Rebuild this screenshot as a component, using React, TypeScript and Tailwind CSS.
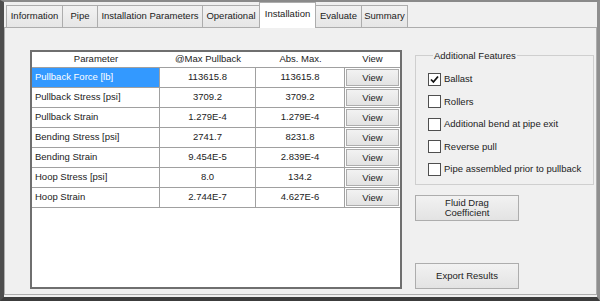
import React from 'react';

const tabs = ['Information', 'Pipe', 'Installation Parameters', 'Operational', 'Installation', 'Evaluate', 'Summary'];
const tabWidths = ['w-[57px]', 'w-[36px]', 'w-[106px]', 'w-[58px]', 'w-[57px]', 'w-[47px]', 'w-[47px]'];

const rows = [
    ['Pullback Force [lb]', '113615.8', '113615.8'],
    ['Pullback Stress [psi]', '3709.2', '3709.2'],
    ['Pullback Strain', '1.279E-4', '1.279E-4'],
    ['Bending Stress [psi]', '2741.7', '8231.8'],
    ['Bending Strain', '9.454E-5', '2.839E-4'],
    ['Hoop Stress [psi]', '8.0', '134.2'],
    ['Hoop Strain', '2.744E-7', '4.627E-6'],
];

const features = [
    { label: 'Ballast', checked: true },
    { label: 'Rollers', checked: false },
    { label: 'Additional bend at pipe exit', checked: false },
    { label: 'Reverse pull', checked: false },
    { label: 'Pipe assembled prior to pullback', checked: false },
];

const CheckBox = ({ checked }: { checked: boolean }) => (
    <div className="w-[13px] h-[13px] border border-[#4f4f4f] bg-white flex items-center justify-center shrink-0">
        {checked && (
            <svg width="9" height="9" viewBox="0 0 9 9">
                <path d="M1 4.5 L3.4 7 L8 1.5" fill="none" stroke="#111" strokeWidth="1.8" />
            </svg>
        )}
    </div>
);

const WinButton = ({ children, className = '' }: { children: React.ReactNode, className?: string }) => (
    <div className={`border border-[#adadad] bg-gradient-to-b from-[#f2f2f2] to-[#e3e3e3] flex items-center justify-center text-center leading-[10px] ${className}`}>
        {children}
    </div>
);

export default function App() {
    return (
        <div className="w-[600px] h-[301px] box-border bg-[#f0f0f0] border-t-2 border-t-[#8a8a8a] border-l-4 border-l-[#4d4d4d] border-b-4 border-b-[#3c3c3c] border-r-[3px] border-r-[#8f8f8f] font-['Liberation_Sans',Arial,sans-serif] text-[9.5px] text-[#222] overflow-hidden">
            {/* tab strip */}
            <div className="h-[25px] flex items-end pl-[2px]">
                {tabs.map((t, i) => {
                    const active = t === 'Installation';
                    return (
                        <div
                            key={t}
                            className={`${tabWidths[i]} flex items-center justify-center border border-[#adadad] -ml-px first:ml-0 ${active ? 'h-[26px] -mb-px bg-white border-b-0 relative z-10 pb-[2px]' : 'h-[22px] bg-gradient-to-b from-[#f2f2f2] to-[#e6e6e6] border-b-0'}`}
                        >
                            {t}
                        </div>
                    );
                })}
            </div>

            {/* tab page */}
            <div className="h-[268px] border border-[#adadad] flex pl-[25px] pt-[22px]">
                {/* grid */}
                <div className="w-[372px] h-[239px] border-2 border-[#6f6f6f] bg-white">
                    <div className="h-[16px] flex items-center border-b border-[#a0a0a0]">
                        <div className="w-[128px] text-center">Parameter</div>
                        <div className="w-[96px] text-center">@Max Pullback</div>
                        <div className="w-[89px] text-center">Abs. Max.</div>
                        <div className="flex-1 text-center">View</div>
                    </div>
                    {rows.map((r, i) => (
                        <div key={r[0]} className="h-[20px] flex border-b border-[#a0a0a0]">
                            <div className={`w-[128px] border-r border-[#a0a0a0] flex items-center pl-[3px] ${i === 0 ? 'bg-[#3399ff] text-white' : ''}`}>{r[0]}</div>
                            <div className="w-[96px] border-r border-[#a0a0a0] flex items-center justify-center">{r[1]}</div>
                            <div className="w-[89px] border-r border-[#a0a0a0] flex items-center justify-center">{r[2]}</div>
                            <div className="flex-1 flex items-center px-[1px] py-[1px]">
                                <WinButton className="w-full h-full">View</WinButton>
                            </div>
                        </div>
                    ))}
                </div>

                {/* right side */}
                <div className="ml-[13px] flex flex-col">
                    <fieldset className="w-[179px] border border-[#cfcfcf] pl-[12px] pt-[7px] pb-[3px]">
                        <legend className="ml-[5px] px-[1px] leading-[11px]">Additional Features</legend>
                        {features.map(f => (
                            <div key={f.label} className="h-[22.5px] flex items-center gap-[3px]">
                                <CheckBox checked={f.checked} />
                                <span>{f.label}</span>
                            </div>
                        ))}
                    </fieldset>
                    <WinButton className="w-[104px] h-[26px] mt-[10px]">Fluid Drag<br />Coefficient</WinButton>
                    <WinButton className="w-[104px] h-[26px] mt-[42px]">Export Results</WinButton>
                </div>
            </div>
        </div>
    );
}
